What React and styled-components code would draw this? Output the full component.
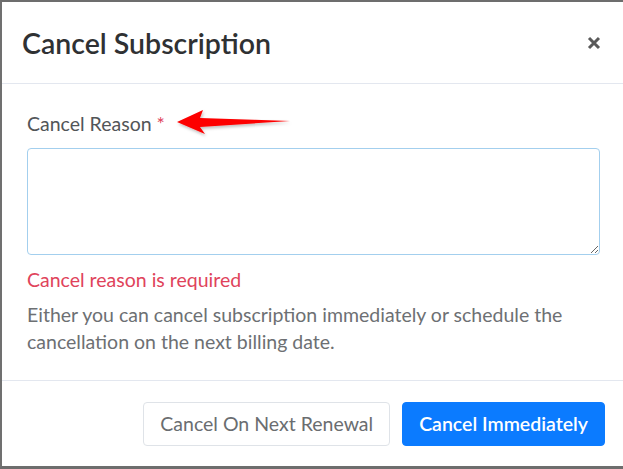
import React from "react";
import styled, { createGlobalStyle } from "styled-components";

const Global = createGlobalStyle`
  html, body { margin: 0; padding: 0; background: #ffffff; }
  body { font-family: Lato, "Open Sans", sans-serif; }
  * { box-sizing: border-box; }
`;

const Frame = styled.div`
  width: 623px;
  height: 469px;
  border-top: 2px solid #6d6d6d;
  border-left: 2px solid #707070;
  border-bottom: 3px solid #6d6d6d;
  background: #fff;
  display: flex;
  flex-direction: column;
  position: relative;
`;

const Header = styled.div`
  height: 82px;
  display: flex;
  align-items: center;
  justify-content: space-between;
  padding: 0 20px 0 20px;
  border-bottom: 1px solid #e3e7ef;
`;

const Title = styled.h2`
  margin: 0;
  font-size: 28.5px;
  font-weight: 600;
  color: #2f3133;
`;

const Close = styled.button`
  border: none;
  background: none;
  padding: 0;
  width: 18px;
  height: 18px;
  display: flex;
  align-items: center;
  justify-content: center;
  cursor: pointer;
`;

const Body = styled.div`
  flex: 1;
  padding: 27px 21px 0 25px;
  display: flex;
  flex-direction: column;
  border-bottom: 1px solid #e3e7ef;
`;

const LabelRow = styled.div`
  position: relative;
  display: flex;
  align-items: center;
  height: 24px;
  margin-bottom: 13px;
`;

const Label = styled.label`
  font-size: 19.5px;
  color: #525558;
`;

const Star = styled.span`
  color: #e0435b;
  margin-left: 5px;
`;

const ArrowWrap = styled.div`
  position: absolute;
  left: 145px;
  top: -3px;
  width: 125px;
  height: 32px;
`;

const TextArea = styled.textarea`
  width: 573px;
  height: 107px;
  border: 1.5px solid #a3cfee;
  border-radius: 4px;
  resize: vertical;
  font-family: inherit;
  font-size: 16px;
  outline: none;
  display: block;
`;

const ErrorText = styled.div`
  margin-top: 13px;
  font-size: 19.5px;
  color: #e0435b;
  line-height: 24px;
`;

const Help = styled.p`
  margin: 9px 0 0;
  font-size: 19.5px;
  line-height: 27px;
  color: #6d7073;
`;

const Footer = styled.div`
  height: 85px;
  display: flex;
  justify-content: flex-end;
  align-items: center;
  gap: 12px;
  padding: 0 18px 0 0;
`;

const Button = styled.button`
  height: 44px;
  padding: 0 16px;
  border-radius: 4px;
  font-family: inherit;
  font-size: 19.5px;
  cursor: pointer;
  border: 1px solid ${(p) => (p.$primary ? "#0b7bff" : "#dfe3e8")};
  background: ${(p) => (p.$primary ? "#0b7bff" : "#ffffff")};
  color: ${(p) => (p.$primary ? "#ffffff" : "#6a6d70")};
  font-weight: ${(p) => (p.$primary ? 600 : 400)};
`;

function Arrow() {
  return (
    <svg width="125" height="32" viewBox="0 0 125 32">
      <defs>
        <filter id="sh" x="-20%" y="-50%" width="140%" height="200%">
          <feDropShadow dx="1" dy="2" stdDeviation="1.5" floodColor="#000" floodOpacity="0.25" />
        </filter>
      </defs>
      <polygon
        points="5,14 31,2 28,10 118,13 28,19 33,26"
        fill="#fd0000"
        filter="url(#sh)"
      />
    </svg>
  );
}

export default function App() {
  return (
    <>
      <Global />
      <Frame>
        <Header>
          <Title>Cancel Subscription</Title>
          <Close aria-label="close">
            <svg width="14" height="14" viewBox="0 0 14 14">
              <path d="M2 2 L12 12 M12 2 L2 12" stroke="#5a5a5a" strokeWidth="3" strokeLinecap="butt" />
            </svg>
          </Close>
        </Header>
        <Body>
          <LabelRow>
            <Label>
              Cancel Reason<Star>*</Star>
            </Label>
            <ArrowWrap>
              <Arrow />
            </ArrowWrap>
          </LabelRow>
          <TextArea />
          <ErrorText>Cancel reason is required</ErrorText>
          <Help>
            Either you can cancel subscription immediately or schedule the
            cancellation on the next billing date.
          </Help>
        </Body>
        <Footer>
          <Button>Cancel On Next Renewal</Button>
          <Button $primary>Cancel Immediately</Button>
        </Footer>
      </Frame>
    </>
  );
}
